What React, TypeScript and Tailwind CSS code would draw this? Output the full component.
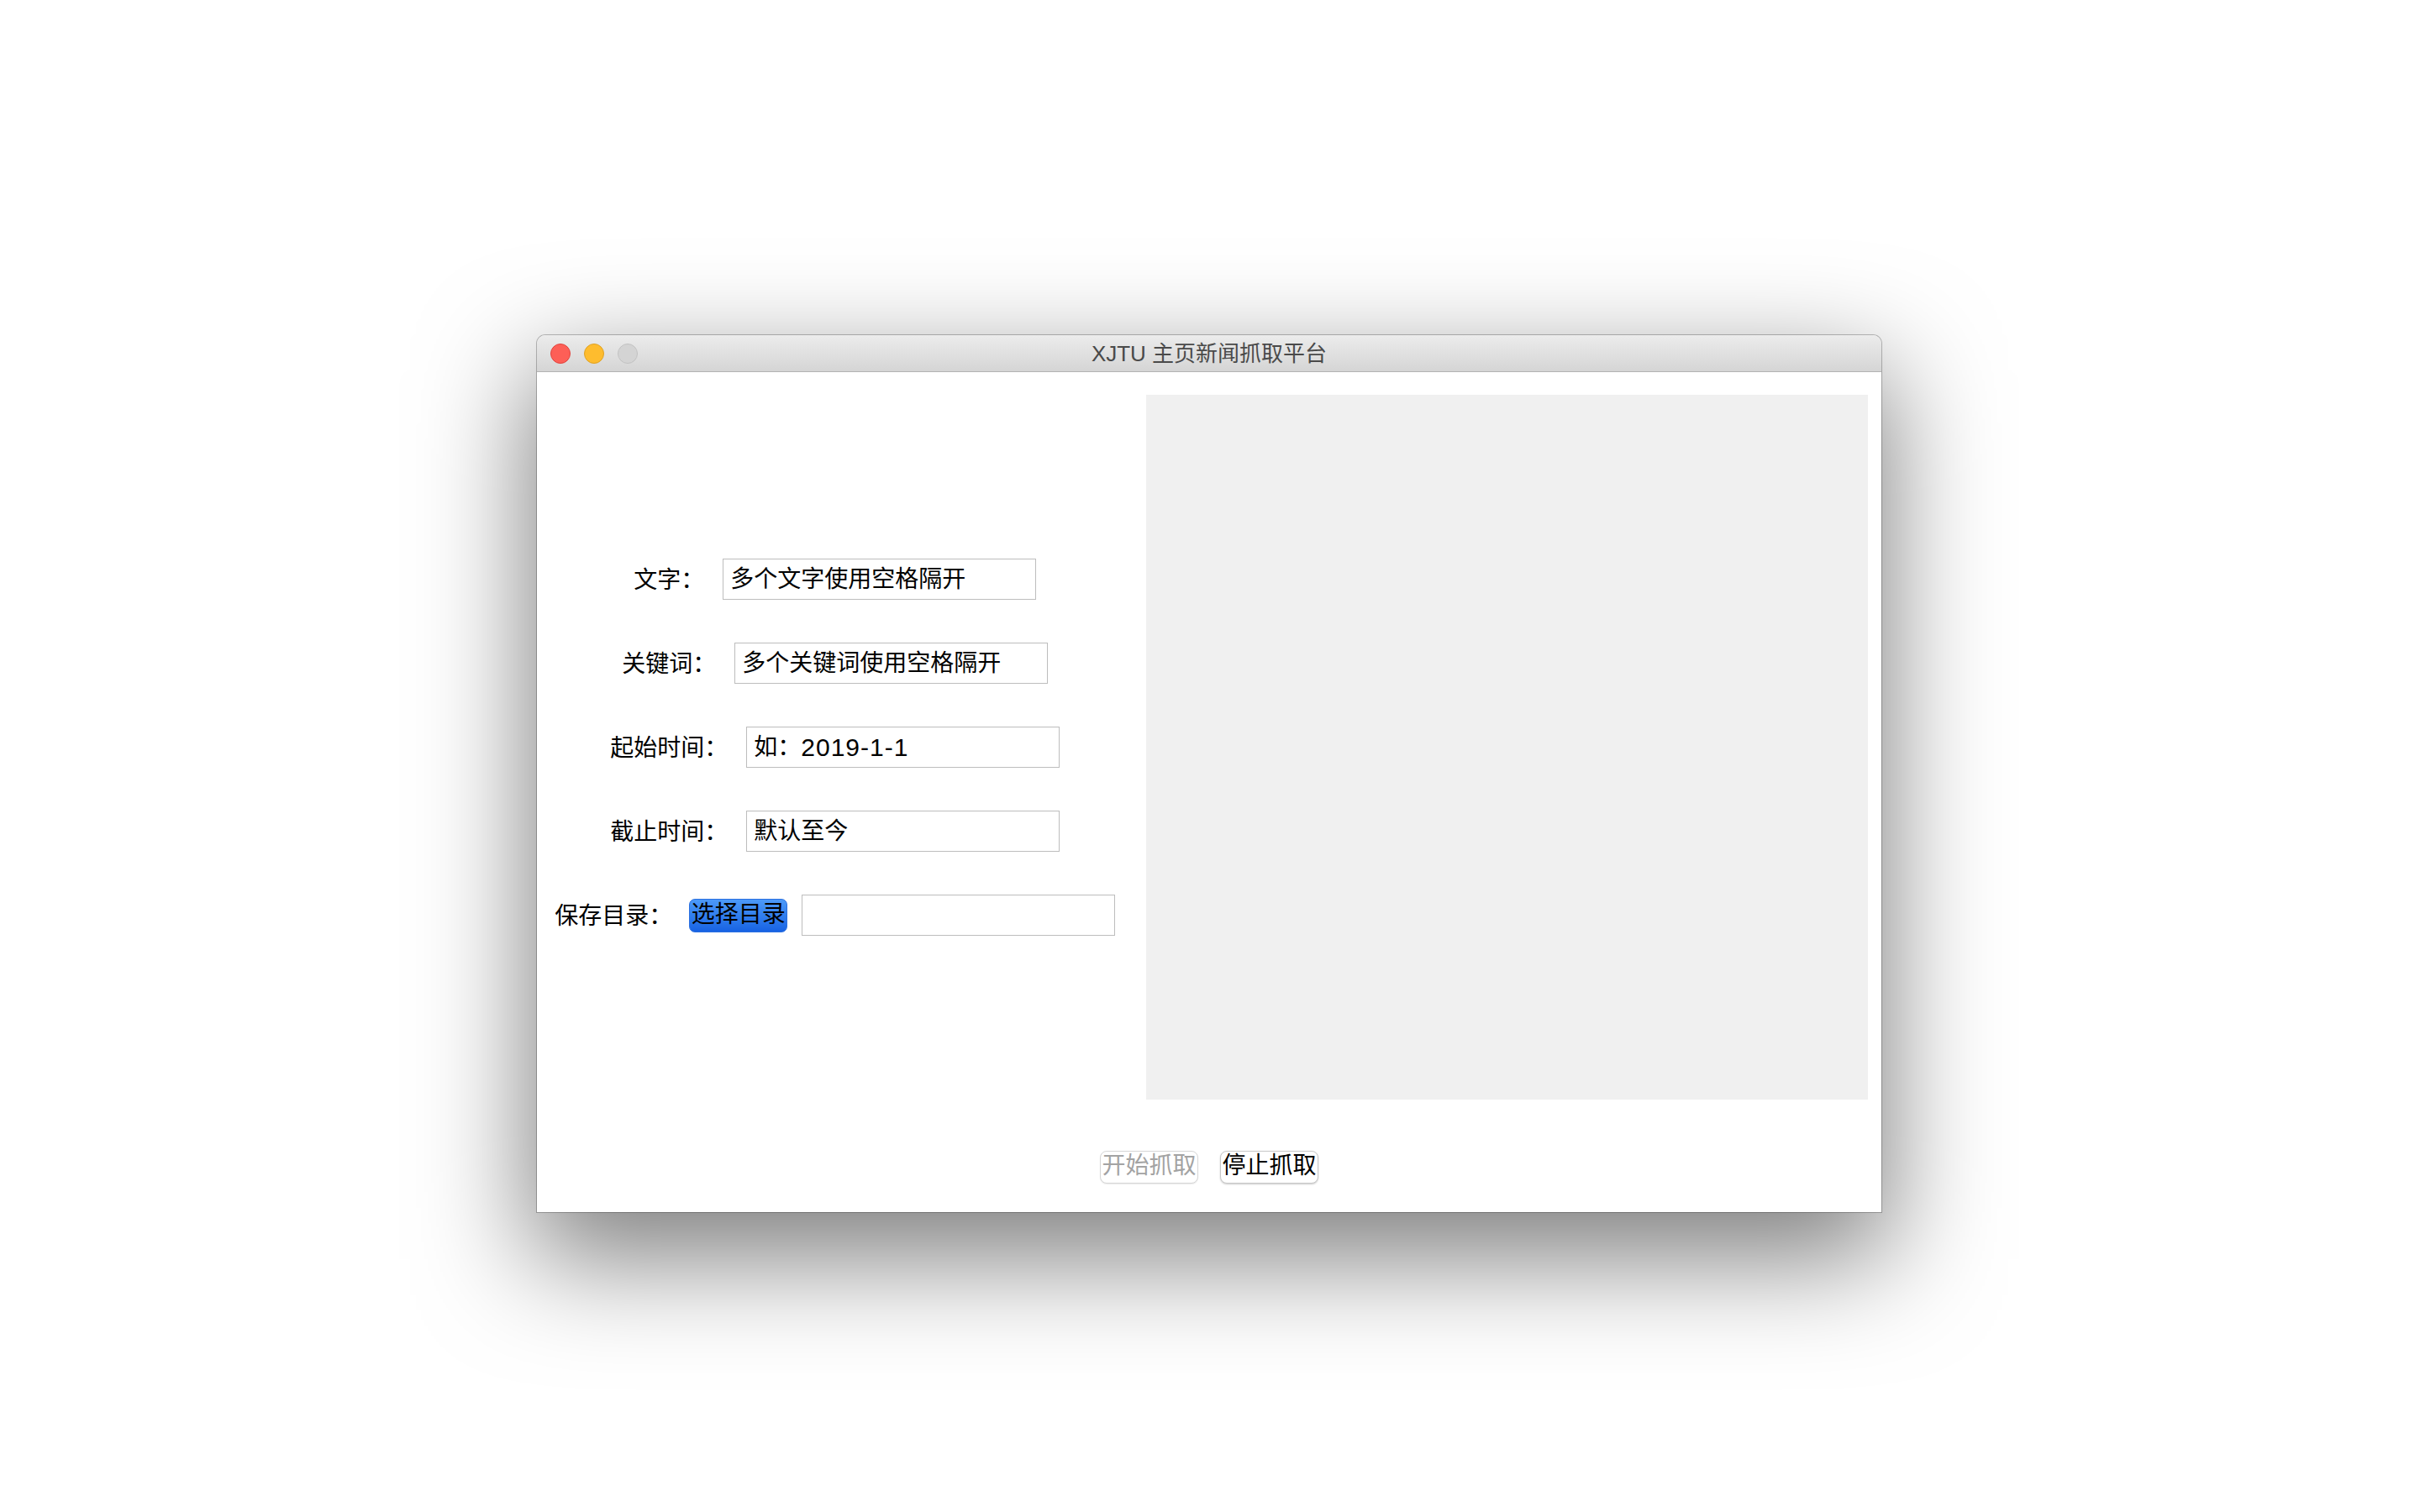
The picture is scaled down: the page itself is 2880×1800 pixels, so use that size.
import React from "react";

const font = { fontFamily: '"Liberation Sans", "Noto Sans CJK SC", sans-serif' };

function Field({ label, children }: { label: string; children: React.ReactNode }) {
  return (
    <div className="flex items-center justify-center gap-[22px]">
      <span className="pt-[2px] text-[28px] leading-none text-black whitespace-nowrap">{label}</span>
      <div className="flex h-[49px] w-[373px] items-center border border-[#bdbdbd] bg-white px-[8px] text-[28px] leading-none text-black whitespace-nowrap">
        {children}
      </div>
    </div>
  );
}

export default function App() {
  return (
    <div className="min-h-[1800px] w-[2880px] bg-white pl-[639px] pt-[399px]" style={font}>
      <div className="flex w-[1600px] flex-col overflow-hidden rounded-t-[10px] bg-white shadow-[0_48px_130px_8px_rgba(0,0,0,0.5)] ring-1 ring-black/25">
        {/* Title bar */}
        <div className="grid h-[44px] grid-cols-[1fr_auto_1fr] items-center border-b border-[#b3b3b3] bg-gradient-to-b from-[#ececec] to-[#d5d5d5]">
          <div className="flex items-center gap-[16px] pl-[16px]">
            <span className="h-[24px] w-[24px] rounded-full border border-[#e0443e] bg-[#fd5f57]" />
            <span className="h-[24px] w-[24px] rounded-full border border-[#dea123] bg-[#febc2e]" />
            <span className="h-[24px] w-[24px] rounded-full border border-[#c2c2c2] bg-[#d4d4d4]" />
          </div>
          <div className="text-[26px] leading-none text-[#4a4a4a]">XJTU 主页新闻抓取平台</div>
          <div />
        </div>

        {/* Content */}
        <div className="flex h-[1000px] flex-col">
          <div className="flex gap-[15px] pr-[16px] pt-[27px]">
            <div className="flex h-[839px] w-[710px] flex-col justify-center gap-[51px]">
              <Field label="文字：">多个文字使用空格隔开</Field>
              <Field label="关键词：">多个关键词使用空格隔开</Field>
              <Field label="起始时间：">
                如：<span className="text-[30px] tracking-[1px]">2019-1-1</span>
              </Field>
              <Field label="截止时间：">默认至今</Field>
              <div className="flex items-center justify-center">
                <span className="mr-[20px] pt-[2px] text-[28px] leading-none text-black whitespace-nowrap">保存目录：</span>
                <button className="mr-[17px] flex h-[40px] w-[117px] items-center justify-center rounded-[7px] border border-[#2a6fe0] bg-gradient-to-b from-[#4c9af8] to-[#1762e3] pb-[2px] text-[28px] leading-none text-black">
                  选择目录
                </button>
                <div className="h-[49px] w-[373px] border border-[#bdbdbd] bg-white" />
              </div>
            </div>
            <div className="h-[839px] w-[860px] bg-[#f0f0f0]" />
          </div>

          <div className="flex justify-center gap-[26px] pt-[61px]">
            <button className="flex h-[39px] w-[117px] items-center justify-center rounded-[8px] border border-[#d6d6d6] bg-white pb-[4px] text-[28px] leading-none text-[#a3a3a3] shadow-[0_1px_1px_rgba(0,0,0,0.08)]">
              开始抓取
            </button>
            <button className="flex h-[39px] w-[117px] items-center justify-center rounded-[8px] border border-[#c8c8c8] bg-white pb-[4px] text-[28px] leading-none text-black shadow-[0_1px_2px_rgba(0,0,0,0.2)]">
              停止抓取
            </button>
          </div>
        </div>
      </div>
    </div>
  );
}
